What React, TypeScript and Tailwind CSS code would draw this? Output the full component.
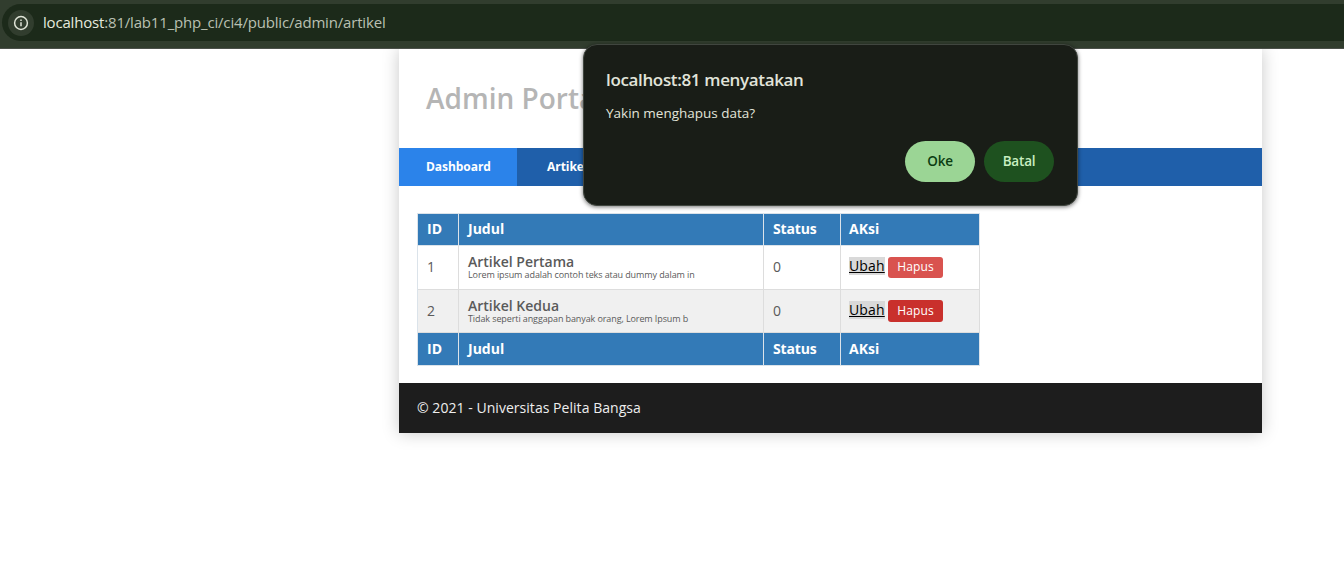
import React from "react";

type Article = {
  id: number;
  title: string;
  excerpt: string;
  status: number;
  rowClass: string;
  titleCellClass: string;
  deleteClass: string;
};

const articles: Article[] = [
  {
    id: 1,
    title: "Artikel Pertama",
    excerpt: "Lorem ipsum adalah contoh teks atau dummy dalam in",
    status: 0,
    rowClass: "h-[44px] bg-white",
    titleCellClass: "pb-[2px]",
    deleteClass: "h-[21px] bg-[#d9534f]",
  },
  {
    id: 2,
    title: "Artikel Kedua",
    excerpt: "Tidak seperti anggapan banyak orang, Lorem Ipsum b",
    status: 0,
    rowClass: "h-[43px] bg-[#f0f0f0]",
    titleCellClass: "pb-0",
    deleteClass: "h-[22px] bg-[#c9302c]",
  },
];

const columns = [
  { name: "ID", pad: "pl-[9px]" },
  { name: "Judul", pad: "pl-[9px]" },
  { name: "Status", pad: "pl-[9px] tracking-[-0.15px]" },
  { name: "AKsi", pad: "pl-[8px]" },
];

function AddressBar() {
  return (
    <header className="h-[49px] border-b border-[#4b504a] bg-[#313d2e] pt-1">
      <div className="ml-[2px] flex h-[37px] items-center rounded-l-full bg-[#1c2a1a] pl-[6px]">
        <span className="flex size-[26px] items-center justify-center rounded-full bg-[#313d2e]">
          <svg width="16" height="16" viewBox="0 0 16 16" fill="none" stroke="#dfe4d7" strokeWidth="1.5">
            <circle cx="8" cy="8" r="6.4" />
            <path d="M8 7.2v4M8 4.4v1.5" />
          </svg>
        </span>
        <span className="mb-[2px] ml-[9px] text-[15px] leading-[20px] tracking-[-0.18px] whitespace-nowrap text-[#b9c0b2]">
          <span className="text-[#e6eadf]">localhost</span>:81/lab11_php_ci/ci4/public/admin/artikel
        </span>
      </div>
    </header>
  );
}

function HeadingRow({ className, cellClass }: { className: string; cellClass: string }) {
  return (
    <tr className={className}>
      {columns.map(({ name, pad }) => (
        <th
          key={name}
          className={`border-r border-b border-[#dbe3ea] bg-[#337ab7] pt-0 text-left text-[14px] leading-[20px] font-bold text-white ${pad} ${cellClass}`}
        >
          {name}
        </th>
      ))}
    </tr>
  );
}

function ArticleTable() {
  const cell = "border-r border-b border-[#dddddd] pt-0 pl-[9px]";
  return (
    <table className="w-[563px] table-fixed border-separate border-spacing-0 border-t border-l border-[#dbe3ea] text-[14px] text-[#5a5a5a]">
      <colgroup>
        <col className="w-[41px]" />
        <col className="w-[305px]" />
        <col className="w-[77px]" />
        <col className="w-[139px]" />
      </colgroup>
      <thead>
        <HeadingRow className="h-[32px]" cellClass="pb-[2px]" />
      </thead>
      <tbody>
        {articles.map((a) => (
          <tr key={a.id} className={a.rowClass}>
            <td className={`${cell} pb-[2px]`}>{a.id}</td>
            <td className={`${cell} ${a.titleCellClass}`}>
              <div className="text-[14px] leading-[16px] font-semibold whitespace-nowrap">{a.title}</div>
              <div className="text-[9px] leading-[10px] tracking-[-0.1px] whitespace-nowrap">{a.excerpt}</div>
            </td>
            <td className={`${cell} pb-[2px]`}>{a.status}</td>
            <td className="border-r border-b border-[#dddddd] py-0 pl-[8px]">
              <div className="flex items-center gap-[3px]">
                <a className="mb-[3px] w-[36px] bg-[#d9d9d9] text-[14px] leading-[18px] tracking-[0.15px] text-black underline">
                  Ubah
                </a>
                <a
                  className={`flex w-[55px] items-center justify-center rounded-[3px] pb-px text-[12px] tracking-[0.15px] text-white ${a.deleteClass}`}
                >
                  Hapus
                </a>
              </div>
            </td>
          </tr>
        ))}
      </tbody>
      <tfoot>
        <HeadingRow className="h-[33px]" cellClass="pb-0" />
      </tfoot>
    </table>
  );
}

function ConfirmDialog() {
  return (
    <div
      role="dialog"
      className="absolute top-[44px] left-[583px] flex h-[162px] w-[495px] flex-col rounded-[14px] border border-[#40463f] bg-[#191d17] pt-[23px] pr-[23px] pl-[22px] text-[#e1e4da] shadow-[0_1px_4px_rgba(0,0,0,0.55)]"
    >
      <h2 className="text-[17px] leading-[24px] font-semibold tracking-[-0.35px] whitespace-nowrap">
        localhost:81 menyatakan
      </h2>
      <p className="mt-[12px] text-[13.5px] leading-[18px] whitespace-nowrap">Yakin menghapus data?</p>
      <div className="mt-[19px] flex justify-end gap-[9px] text-[13.5px] font-semibold tracking-[-0.2px]">
        <button className="h-[41px] w-[70px] rounded-full bg-[#9bd595] text-[#0b3d12]">Oke</button>
        <button className="h-[41px] w-[70px] rounded-full bg-[#1e511f] text-[#c9efc1]">Batal</button>
      </div>
    </div>
  );
}

export default function App() {
  return (
    <div className="relative h-[566px] overflow-hidden bg-white font-['Open_Sans',sans-serif]">
      <AddressBar />
      <div className="h-[517px] overflow-hidden">
        <main className="ml-[399px] h-[384px] w-[863px] bg-white shadow-[0_0_16px_rgba(0,0,0,0.22)]">
          <div className="flex h-[99px] items-center pb-[2px] pl-[27px]">
            <h1 className="text-[28px] leading-[40px] font-semibold whitespace-nowrap text-[#b5b5b5]">Admin Portal</h1>
          </div>
          <nav className="flex h-[38px] items-stretch bg-[#1f5faa] text-[12px] font-bold tracking-[-0.05px] text-white">
            <a className="flex w-[118px] items-center bg-[#2b83ea] pl-[27px]">Dashboard</a>
            <a className="flex items-center pl-[30px]">Artikel</a>
          </nav>
          <section className="h-[197px] pt-[27px] pl-[18px]">
            <ArticleTable />
          </section>
          <footer className="flex h-[50px] items-center bg-[#1d1d1d] pb-[2px] pl-[18px] text-[14px] tracking-[0.04px] text-[#eeeeee]">
            <p>© 2021 - Universitas Pelita Bangsa</p>
          </footer>
        </main>
      </div>
      <ConfirmDialog />
    </div>
  );
}
